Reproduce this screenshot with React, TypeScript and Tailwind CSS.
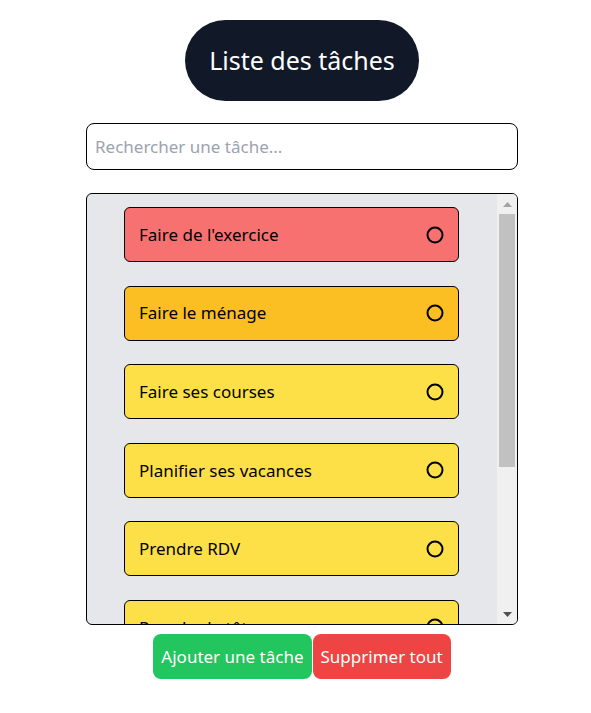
import React from 'react';

interface Task {
  id: number;
  label: string;
  color: string;
}

const tasks: Task[] = [
  { id: 1, label: "Faire de l'exercice", color: 'bg-[#f87171]' },
  { id: 2, label: 'Faire le ménage', color: 'bg-[#fbbf24]' },
  { id: 3, label: 'Faire ses courses', color: 'bg-[#fde047]' },
  { id: 4, label: 'Planifier ses vacances', color: 'bg-[#fde047]' },
  { id: 5, label: 'Prendre RDV', color: 'bg-[#fde047]' },
  { id: 6, label: 'Prendre la tête', color: 'bg-[#fde047]' },
];

const App: React.FC = () => {
  const [search, setSearch] = React.useState('');

  const visible = tasks.filter((t) => t.label.toLowerCase().includes(search.toLowerCase()));

  return (
    <div className="flex flex-col items-center pl-[13px] pt-5 font-['Noto_Sans',sans-serif]">
      <h1 className="flex h-[81px] items-center rounded-full bg-[#111827] px-6 text-[25px] text-white">Liste des tâches</h1>

      <input
        type="text"
        value={search}
        onChange={(e) => setSearch(e.target.value)}
        placeholder="Rechercher une tâche..."
        className="mt-[22px] h-[47px] w-[432px] rounded-lg border border-black px-2 text-[17px] text-black placeholder:text-[#9ca3af] focus:outline-none"
      />

      <div className="mt-[23px] flex h-[432px] w-[432px] overflow-hidden rounded-md border border-black bg-[#e5e7eb]">
        <ul className="flex flex-1 flex-col gap-[23.6px] overflow-y-auto py-[13px] [scrollbar-width:none]">
          {visible.map((task) => (
            <li
              key={task.id}
              className={`ml-[37px] flex h-[55px] w-[335px] shrink-0 items-center justify-between rounded-md border border-black px-[14px] text-[17px] text-black ${task.color}`}
            >
              <span>{task.label}</span>
              <svg width="18" height="18" viewBox="0 0 18 18" fill="none" stroke="black" strokeWidth="2">
                <circle cx="9" cy="9" r="7.5" />
              </svg>
            </li>
          ))}
        </ul>

        {/* scrollbar */}
        <div className="flex w-5 flex-col bg-[#f0f0f0]">
          <div className="flex h-5 items-center justify-center">
            <svg width="9" height="5" viewBox="0 0 9 5">
              <path d="M0 5 L4.5 0 L9 5 Z" fill="#a3a3a3" />
            </svg>
          </div>
          <div className="flex-1 px-0.5">
            <div className="h-[253px] bg-[#c1c1c1]" />
          </div>
          <div className="flex h-5 items-center justify-center">
            <svg width="9" height="5" viewBox="0 0 9 5">
              <path d="M0 0 L9 0 L4.5 5 Z" fill="#505050" />
            </svg>
          </div>
        </div>
      </div>

      <div className="mt-[9px] flex">
        <button className="h-[45px] rounded-lg bg-[#22c55e] px-2 text-[17px] text-white">Ajouter une tâche</button>
        <button className="ml-px h-[45px] rounded-lg bg-[#ef4444] px-2 text-[17px] text-white">Supprimer tout</button>
      </div>
    </div>
  );
};

export default App;
